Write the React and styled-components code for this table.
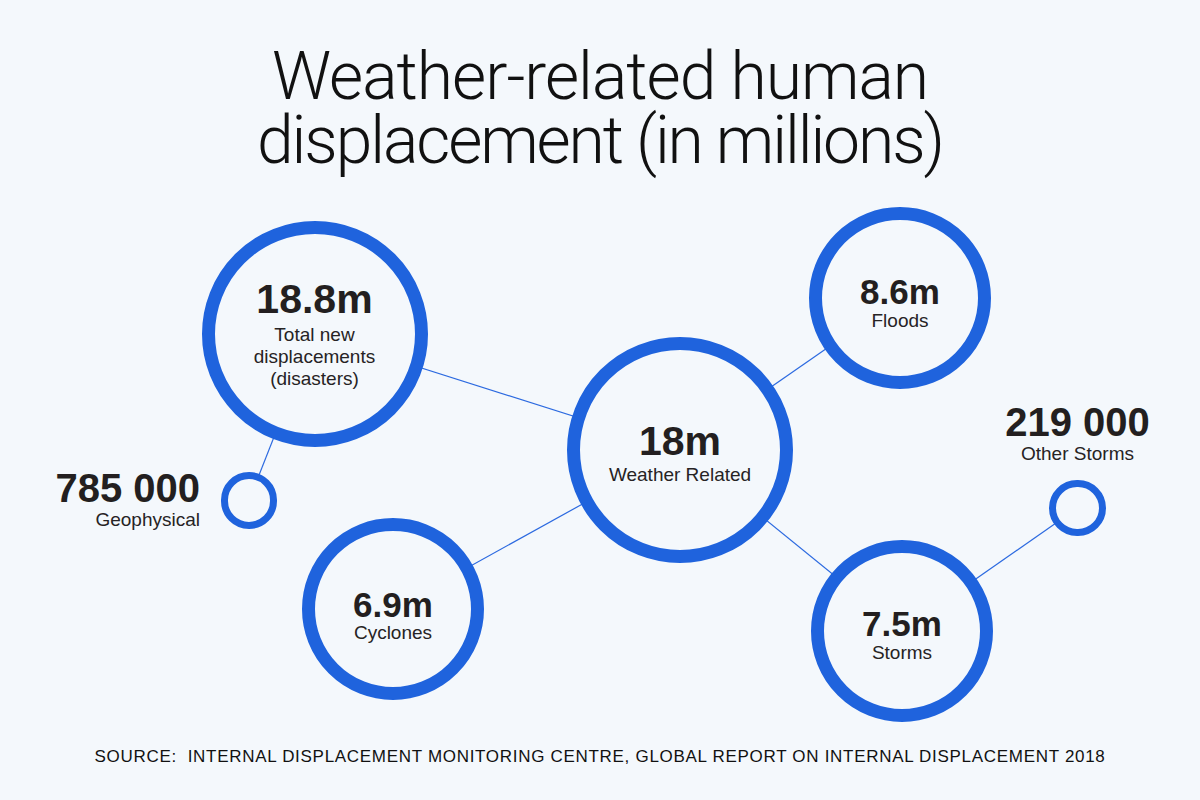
import React from 'react';
import styled, { createGlobalStyle } from 'styled-components';

const BLUE = '#1f63dd';
const PAPER = '#f4f8fc';
const INK = '#231f20';

const nodes = [
    { id: 'total', x: 314.5, y: 134, r: 113, ring: 13, value: '18.8m', size: 41, label: ['Total new', 'displacements', '(disasters)'], nudge: 0, gap: 4 },
    { id: 'weather', x: 680, y: 250, r: 113, ring: 13, value: '18m', size: 41, label: ['Weather Related'], nudge: 3, gap: 2 },
    { id: 'floods', x: 900, y: 97.5, r: 91, ring: 13, value: '8.6m', size: 35, label: ['Floods'], nudge: 5, gap: 1 },
    { id: 'cyclones', x: 393, y: 409, r: 91, ring: 13, value: '6.9m', size: 35, label: ['Cyclones'], nudge: 6, gap: 0 },
    { id: 'storms', x: 902, y: 430.5, r: 91, ring: 13, value: '7.5m', size: 35, label: ['Storms'], nudge: 4, gap: 1 },
    { id: 'geo', x: 249, y: 300.7, r: 28.3, ring: 7 },
    { id: 'other', x: 1077.5, y: 308, r: 28.3, ring: 7 },
];

const links = [
    ['total', 'weather'],
    ['total', 'geo'],
    ['weather', 'floods'],
    ['weather', 'cyclones'],
    ['weather', 'storms'],
    ['storms', 'other'],
];

const find = (id) => nodes.find((n) => n.id === id);

const App = () => {
    return (
        <>
            <GlobalStyle />
            <Page>
                <Header>
                    <Title>
                        <TitleLine $track={-1}>Weather-related human</TitleLine>
                        <TitleLine $track={-2.1}>displacement (in millions)</TitleLine>
                    </Title>
                </Header>

                <Diagram>
                    <Links viewBox="0 0 1200 530">
                        {links.map(([a, b]) => {
                            const from = find(a);
                            const to = find(b);
                            return <line key={a + b} x1={from.x} y1={from.y} x2={to.x} y2={to.y} />;
                        })}
                    </Links>

                    {nodes.map((n) => (
                        <Ring key={n.id} $x={n.x} $y={n.y} $r={n.r} $ring={n.ring} $nudge={n.nudge || 0}>
                            {n.value && (
                                <>
                                    <Figure $size={n.size} $gap={n.gap}>{n.value}</Figure>
                                    {n.label.map((line) => (
                                        <Label key={line}>{line}</Label>
                                    ))}
                                </>
                            )}
                        </Ring>
                    ))}

                    <Callout $side="right" $at={1000} $top={268}>
                        <Figure $size={40} $gap={1}>785 000</Figure>
                        <Label>Geophysical</Label>
                    </Callout>

                    <Callout $side="center" $at={1077.5} $top={202}>
                        <Figure $size={40} $gap={1}>219 000</Figure>
                        <Label>Other Storms</Label>
                    </Callout>
                </Diagram>

                <Footer>SOURCE:&nbsp; INTERNAL DISPLACEMENT MONITORING CENTRE, GLOBAL REPORT ON INTERNAL DISPLACEMENT 2018</Footer>
            </Page>
        </>
    );
};

export default App;

const GlobalStyle = createGlobalStyle`
    * {
        box-sizing: border-box;
    }

    html, body {
        margin: 0;
        padding: 0;
        background-color: ${PAPER};
    }

    body {
        font-family: "Liberation Sans", Arial, sans-serif;
        color: ${INK};
    }
`;

const Page = styled.div`
    display: flex;
    flex-direction: column;
    width: 1200px;
    height: 800px;
    overflow: hidden;
    background-color: ${PAPER};
`;

const Header = styled.header`
    display: flex;
    justify-content: center;
    height: 200px;
    padding-top: 45px;
`;

const Title = styled.h1`
    display: flex;
    flex-direction: column;
    align-items: center;
    margin: 0;
    font-family: Roboto, "Liberation Sans", sans-serif;
    font-weight: 300;
    font-size: 66px;
    line-height: 64px;
    color: #111;
`;

const TitleLine = styled.span`
    display: block;
    letter-spacing: ${(p) => p.$track}px;
    white-space: nowrap;
`;

const Diagram = styled.main`
    position: relative;
    height: 530px;
`;

const Links = styled.svg`
    position: absolute;
    inset: 0;
    width: 100%;
    height: 100%;

    line {
        stroke: #2c6ae0;
        stroke-width: 1.2;
    }
`;

const Ring = styled.div`
    position: absolute;
    left: ${(p) => p.$x - p.$r}px;
    top: ${(p) => p.$y - p.$r}px;
    width: ${(p) => p.$r * 2}px;
    height: ${(p) => p.$r * 2}px;
    display: flex;
    flex-direction: column;
    align-items: center;
    justify-content: center;
    padding-top: ${(p) => p.$nudge * 2}px;
    border: ${(p) => p.$ring}px solid ${BLUE};
    border-radius: 50%;
    background-color: ${PAPER};
    text-align: center;
`;

const Callout = styled.div`
    position: absolute;
    top: ${(p) => p.$top}px;
    display: flex;
    flex-direction: column;
    align-items: ${(p) => (p.$side === 'right' ? 'flex-end' : 'center')};
    ${(p) => (p.$side === 'right' ? `right: ${p.$at}px;` : `left: ${p.$at}px; transform: translateX(-50%);`)}
    white-space: nowrap;
`;

const Figure = styled.div`
    font-weight: 700;
    font-size: ${(p) => p.$size}px;
    line-height: ${(p) => p.$size}px;
    margin-bottom: ${(p) => p.$gap}px;
    color: ${INK};
    white-space: nowrap;
`;

const Label = styled.div`
    font-size: 19px;
    line-height: 22px;
    color: #262324;
    white-space: nowrap;
`;

const Footer = styled.footer`
    padding-top: 17px;
    font-size: 17px;
    line-height: 20px;
    letter-spacing: 0.7px;
    text-align: center;
    color: #111;
    white-space: nowrap;
`;
